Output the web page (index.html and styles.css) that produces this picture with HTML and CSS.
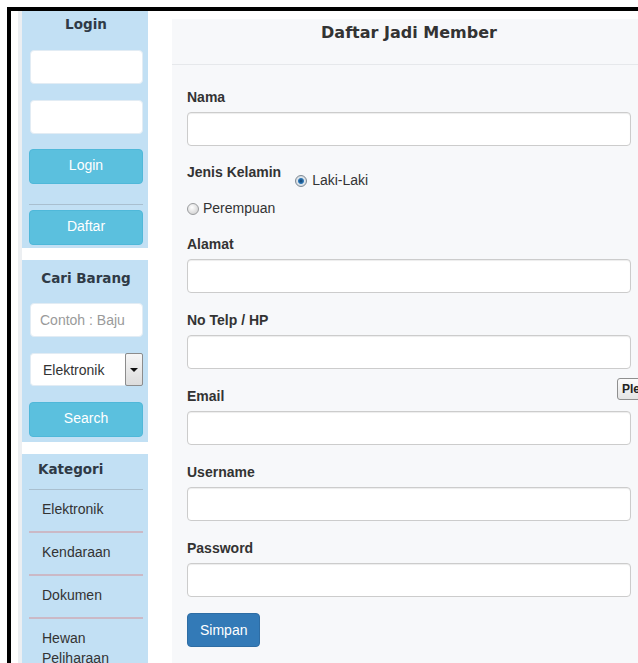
FILE: index.html
```html
<!DOCTYPE html>
<html lang="id">
<head>
<meta charset="utf-8">
<title>Daftar Jadi Member</title>
<link rel="stylesheet" href="styles.css">
</head>
<body>
<div class="frame">
  <aside class="sidebar">
    <section class="panel panel-login">
      <h3 class="panel-title">Login</h3>
      <input class="side-input first" type="text">
      <input class="side-input" type="password">
      <button class="btn-info btn-login" type="button">Login</button>
      <hr class="side-sep">
      <button class="btn-info btn-daftar" type="button">Daftar</button>
    </section>

    <section class="panel panel-search">
      <h3 class="panel-title">Cari Barang</h3>
      <input class="side-input first" type="text" placeholder="Contoh : Baju">
      <div class="select-wrap">
        <select class="side-select">
          <option>Elektronik</option>
          <option>Kendaraan</option>
          <option>Dokumen</option>
          <option>Hewan Peliharaan</option>
        </select>
        <span class="select-arrow"></span>
      </div>
      <button class="btn-info btn-search" type="button">Search</button>
    </section>

    <section class="panel panel-cat">
      <h3 class="panel-title cat-title">Kategori</h3>
      <ul class="cat-list">
        <li>Elektronik</li>
        <li>Kendaraan</li>
        <li>Dokumen</li>
        <li>Hewan<br>Peliharaan</li>
      </ul>
    </section>
  </aside>

  <main class="content">
    <div class="content-head">
      <h2>Daftar Jadi Member</h2>
    </div>
    <form class="content-body">
      <div class="group">
        <label class="field-label">Nama</label>
        <input class="field" type="text">
      </div>

      <div class="gender">
        <div class="gender-row">
          <span class="field-label inline">Jenis Kelamin</span>
          <label class="radio first-radio"><input type="radio" name="jk" checked>Laki-Laki</label>
        </div>
        <label class="radio second-radio"><input type="radio" name="jk">Perempuan</label>
      </div>

      <div class="group">
        <label class="field-label">Alamat</label>
        <input class="field" type="text">
      </div>
      <div class="group">
        <label class="field-label">No Telp / HP</label>
        <input class="field" type="text">
      </div>
      <div class="group">
        <label class="field-label">Email</label>
        <input class="field" type="email">
      </div>
      <div class="group">
        <label class="field-label">Username</label>
        <input class="field" type="text">
      </div>
      <div class="group last">
        <label class="field-label">Password</label>
        <input class="field" type="password">
      </div>

      <button class="btn-primary" type="button">Simpan</button>
    </form>
    <span class="tip">Please fill out this field.</span>
  </main>
</div>
</body>
</html>
```

FILE: styles.css
```css
html, body {
  margin: 0;
  height: 663px;
  overflow: hidden;
  background: #fff;
}

body {
  font-family: "Liberation Sans", Arial, sans-serif;
  font-size: 14px;
  color: #333;
}

/* outer frame with the dark top/left edge */
.frame {
  margin: 7px 0 0 7px;
  border-top: 4px solid #000;
  border-left: 4px solid #000;
  padding-left: 7px;
  height: 720px;
  display: flex;
  align-items: flex-start;
}

/* ---------- sidebar ---------- */
.sidebar {
  flex: none;
  width: 126px;
  border-left: 4px solid #eceff2;
  display: flex;
  flex-direction: column;
  gap: 12px;
  min-height: 720px;
}

.panel {
  background: #c2e0f4;
  padding: 0 5px 0 7px;
}

.panel-title {
  margin: 0;
  font-family: "DejaVu Sans", Verdana, sans-serif;
  font-weight: bold;
  font-size: 13.5px;
  line-height: 20px;
  text-align: center;
  color: #2f3a46;
}

.side-input {
  display: block;
  box-sizing: border-box;
  width: 113px;
  height: 34px;
  margin: 16px 0 0 1px;
  padding: 6px 9px;
  border: 1px solid #e2ecf4;
  border-radius: 4px;
  background: #fff;
  font-family: "Liberation Sans", Arial, sans-serif;
  font-size: 14px;
  color: #555;
  outline: none;
}

.side-input::placeholder {
  color: #9a9a9a;
}

.btn-info {
  display: block;
  box-sizing: border-box;
  width: 114px;
  height: 35px;
  border: 1px solid #4fb8d9;
  border-radius: 4px;
  background: #5bc0de;
  color: #fff;
  font-family: "Liberation Sans", Arial, sans-serif;
  font-size: 14px;
  padding: 0 0 3px;
}

/* login panel */
.panel-login {
  padding-top: 3px;
  padding-bottom: 3px;
}

.panel-login .btn-login {
  margin-top: 15px;
}

.side-sep {
  margin: 20px 0 0;
  border: 0;
  border-top: 1px solid #a9bfcf;
  height: 0;
}

.panel-login .btn-daftar {
  margin-top: 5px;
}

/* search panel */
.panel-search {
  padding-top: 8px;
  padding-bottom: 5px;
}

.panel-search .side-input.first {
  margin-top: 15px;
}

.select-wrap {
  display: flex;
  margin: 16px 0 0 1px;
  width: 113px;
  height: 33px;
}

.side-select {
  flex: 1;
  min-width: 0;
  -webkit-appearance: none;
  appearance: none;
  border: 1px solid #e2ecf4;
  border-right: 0;
  border-radius: 4px 0 0 4px;
  background: #fff;
  padding: 0 0 0 12px;
  font-family: "Liberation Sans", Arial, sans-serif;
  font-size: 14px;
  color: #333;
  outline: none;
}

.select-arrow {
  flex: none;
  position: relative;
  box-sizing: border-box;
  width: 18px;
  height: 33px;
  border: 1px solid #8c8c8c;
  border-radius: 2px;
  background: linear-gradient(#f6f6f6, #dcdcdc);
}

.select-arrow::after {
  content: "";
  position: absolute;
  left: 50%;
  top: 50%;
  margin: -2px 0 0 -4px;
  border-left: 4px solid transparent;
  border-right: 4px solid transparent;
  border-top: 4px solid #111;
}

.panel-search .btn-search {
  margin-top: 16px;
}

/* category panel */
.panel-cat {
  padding-top: 5px;
  flex: 1;
}

.cat-title {
  text-align: left;
  padding: 0 0 10px 9px;
  border-bottom: 1px solid #a9bfcf;
}

.cat-list {
  list-style: none;
  margin: 0;
  padding: 0;
}

.cat-list li {
  padding: 9px 0 12px 13px;
  line-height: 20px;
  border-bottom: 2px solid #cbb9c6;
  color: #333;
}

/* ---------- main content ---------- */
.content {
  position: relative;
  flex: none;
  width: 474px;
  margin: 8px 0 0 24px;
  min-height: 720px;
  background: #f7f8fa;
}

.content-head {
  box-sizing: border-box;
  height: 46px;
  padding-top: 2px;
  border-bottom: 1px solid #e6e8eb;
  text-align: center;
}

.content-head h2 {
  margin: 0;
  font-family: "DejaVu Sans", Verdana, sans-serif;
  font-weight: bold;
  font-size: 16px;
  line-height: 24px;
  color: #333;
}

.content-body {
  padding: 22px 15px 0;
}

.field-label {
  display: block;
  font-weight: bold;
  font-size: 14px;
  line-height: 20px;
  margin-bottom: 5px;
  color: #333;
}

.field-label.inline {
  display: inline-block;
  margin-bottom: 0;
}

.field {
  display: block;
  box-sizing: border-box;
  width: 444px;
  height: 34px;
  padding: 6px 12px;
  border: 1px solid #ccc;
  border-radius: 4px;
  background: #fff;
  box-shadow: inset 0 1px 1px rgba(0, 0, 0, 0.075);
  font-family: "Liberation Sans", Arial, sans-serif;
  font-size: 14px;
  outline: none;
}

.group {
  margin-bottom: 17px;
}

.group.last {
  margin-bottom: 15px;
}

/* gender radios */
.gender {
  margin-top: -1px;
  margin-bottom: 16px;
}

.gender-row {
  display: flex;
  align-items: flex-start;
}

.radio {
  display: flex;
  align-items: center;
  line-height: 20px;
  font-size: 14px;
  color: #333;
}

.first-radio {
  margin: 8px 0 0 14px;
}

.second-radio {
  margin-top: 8px;
}

.radio input {
  -webkit-appearance: none;
  appearance: none;
  box-sizing: border-box;
  width: 12px;
  height: 12px;
  margin: 2px 5px 0 0;
  border: 1px solid #9a9c9e;
  border-radius: 50%;
  background: radial-gradient(circle at 40% 35%, #ffffff 0, #e6e6e6 45%, #c9c9c9 100%);
}

.radio input:checked {
  border-color: #7f8a94;
  background: radial-gradient(circle at 50% 50%, #123f6b 0, #2f79b8 2.5px, #dfe6ec 3.5px, #c4cbd1 100%);
}

.second-radio input {
  margin-right: 4px;
}

.btn-primary {
  display: block;
  box-sizing: border-box;
  height: 34px;
  margin-top: 16px;
  padding: 0 12px;
  border: 1px solid #2e6da4;
  border-radius: 4px;
  background: #337ab7;
  color: #fff;
  font-family: "Liberation Sans", Arial, sans-serif;
  font-size: 14px;
}

/* browser validation bubble peeking in from the right */
.tip {
  position: absolute;
  left: 445px;
  top: 359px;
  box-sizing: border-box;
  height: 22px;
  padding: 0 4px;
  border: 1px solid #8f8f8f;
  border-radius: 3px;
  background: linear-gradient(#fbfbfb, #e4e4e4);
  font-family: "Liberation Sans", Arial, sans-serif;
  font-weight: bold;
  font-size: 12px;
  line-height: 20px;
  color: #222;
  white-space: nowrap;
}
```
